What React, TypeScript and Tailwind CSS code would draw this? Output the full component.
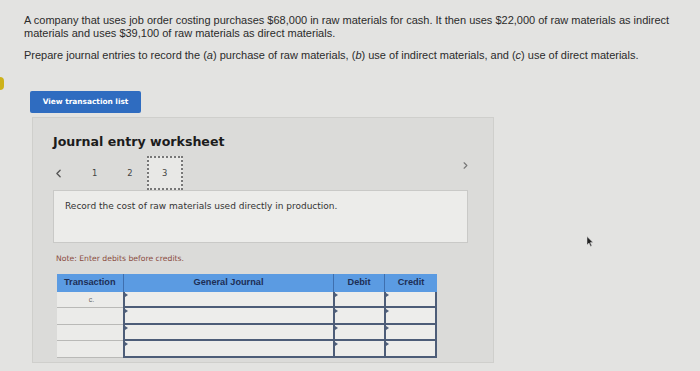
import { ChevronLeft, ChevronRight } from "lucide-react"

const rows = ["c.", "", "", ""]

function Cursor() {
  return (
    <svg className="absolute left-[586px] top-[236px] h-[11px] w-[8px]" viewBox="0 0 8 11">
      <path d="M1 0.5 L1 9 L3 7 L4.6 10.4 L5.8 9.8 L4.3 6.6 L7 6.6 Z" fill="#222" stroke="#ddd" strokeWidth="0.5" />
    </svg>
  )
}

export default function App() {
  return (
    <div className="relative h-[371px] w-[700px] overflow-hidden bg-[#e3e3e1] font-['Liberation_Sans',Arial,sans-serif]">
      <div className="absolute left-0 top-[77px] h-[13px] w-[4px] rounded-r-full bg-[#cdb21a]" />
      <Cursor />

      <div className="pl-[24px] pt-[14px] pr-[10px] text-[11px] leading-[13px] text-[#2b2b2b]">
        <p>
          A company that uses job order costing purchases $68,000 in raw materials for cash. It then uses $22,000 of raw materials as indirect
          materials and uses $39,100 of raw materials as direct materials.
        </p>
        <p className="mt-[9px]">
          Prepare journal entries to record the (<i>a</i>) purchase of raw materials, (<i>b</i>) use of indirect materials, and (<i>c</i>) use of direct materials.
        </p>
      </div>

      <div className="ml-[30px] mt-[29px] flex h-[22px] w-[111px] items-center justify-center rounded-[2px] bg-[#2f6cc0] font-['DejaVu_Sans',Verdana,sans-serif] text-[7.4px] font-bold text-white">
        View transaction list
      </div>

      <div className="ml-[32px] mt-[4px] h-[246px] w-[462px] overflow-hidden border border-[#cfcfcc] bg-[#dbdbd9] pl-[20px] pt-[16px] font-['DejaVu_Sans',Verdana,sans-serif]">
        <h2 className="text-[12.6px] font-bold leading-[16px] text-[#1c1c1c]">Journal entry worksheet</h2>

        <div className="mt-[6px] flex h-[34px] items-center pr-[22px] text-[8.4px] text-[#444]">
          <ChevronLeft className="-ml-[1px] h-[13px] w-[13px] text-[#555]" strokeWidth={2.5} />
          <span className="ml-[27px]">1</span>
          <span className="ml-[30px]">2</span>
          <div className="ml-[14px] flex h-[34px] w-[36px] items-center justify-center border-2 border-dotted border-[#777] bg-[#e8e8e6]">3</div>
          <ChevronRight className="ml-auto h-[11px] w-[11px] -translate-y-[8px] text-[#777]" strokeWidth={2.5} />
        </div>

        <div className="h-[53px] w-[415px] border border-[#c9c9c7] bg-[#ececea] pl-[11px] pt-[9px] text-[9px] text-[#333]">
          Record the cost of raw materials used directly in production.
        </div>

        <p className="ml-[3px] mt-[10px] text-[7.7px] text-[#8a4b3e]">Note: Enter debits before credits.</p>

        <div className="ml-[4px] mt-[9px] w-[380px] font-['Liberation_Sans',Arial,sans-serif]">
          <div className="grid h-[18px] grid-cols-[66px_210px_51px_53px] bg-[#5b9be2] text-[9.2px] font-bold text-[#1d2e55]">
            <div className="flex items-center pl-[7px]">Transaction</div>
            <div className="flex items-center justify-center border-l border-[#3f6fae]">General Journal</div>
            <div className="flex items-center justify-center border-l border-[#3f6fae]">Debit</div>
            <div className="flex items-center justify-center border-l border-[#3f6fae]">Credit</div>
          </div>
          {rows.map((t, i) => (
            <div key={i} className="grid h-[16.5px] grid-cols-[66px_210px_51px_53px]">
              <div className="flex items-center justify-center border-b border-[#b9b9b7] bg-[#ebebe9] pl-[3px] pt-[2px] text-[7px] text-[#666]">{t}</div>
              <div className="relative border-b-2 border-l-2 border-[#4d5d78] bg-[#ededeb]">
                <span className="absolute left-0 top-[1px] h-0 w-0 border-y-[2px] border-l-[3px] border-y-transparent border-l-[#4d5d78]" />
              </div>
              <div className="relative border-b-2 border-l-2 border-[#4d5d78] bg-[#ededeb]">
                <span className="absolute left-0 top-[1px] h-0 w-0 border-y-[2px] border-l-[3px] border-y-transparent border-l-[#4d5d78]" />
              </div>
              <div className="relative border-b-2 border-l-2 border-r-2 border-[#4d5d78] bg-[#ededeb]">
                <span className="absolute left-0 top-[1px] h-0 w-0 border-y-[2px] border-l-[3px] border-y-transparent border-l-[#4d5d78]" />
              </div>
            </div>
          ))}
        </div>
      </div>
    </div>
  )
}
